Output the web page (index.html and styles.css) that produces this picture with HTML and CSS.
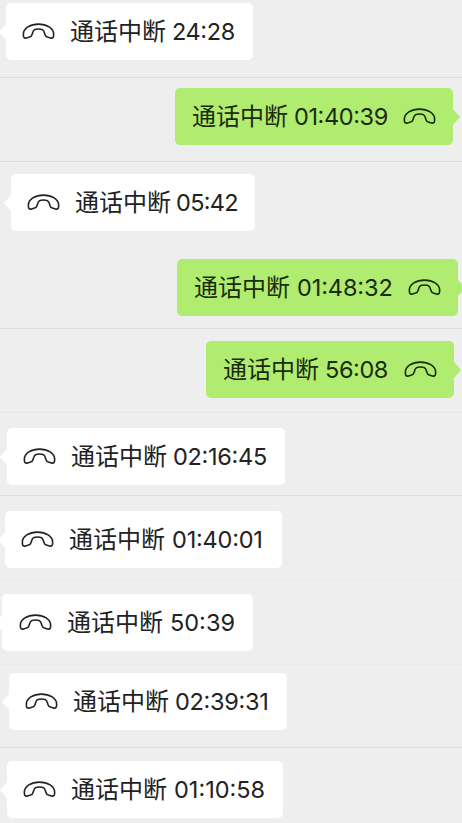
FILE: index.html
```html
<!DOCTYPE html>
<html lang="zh-CN">
<head>
    <meta charset="UTF-8">
    <meta name="viewport" content="width=device-width, initial-scale=1.0">
    <title>通话记录</title>
    <link rel="stylesheet" href="styles.css">
</head>
<body>
    <svg class="defs" width="0" height="0">
        <symbol id="phone" viewBox="0 0 34 18">
            <path d="M1 11.7C1 5.6 8.2 1.2 17 1.2S33 5.6 33 11.7V13.2C33 15.8 31.6 16.3 29.6 15.8L26.4 14.9C24.9 14.5 24.3 13.6 23.8 12.1L22.9 9.3C22.2 6.9 20.5 6.3 17 6.3S11.8 6.9 11.1 9.3L10.2 12.1C9.7 13.6 9.1 14.5 7.6 14.9L4.4 15.8C2.4 16.3 1 15.8 1 13.2Z"/>
        </symbol>
    </svg>
    <div class="chat">
        <div class="row row1">
            <div class="bubble left">
                <svg class="icon"><use href="#phone"/></svg>
                <p><span class="label">通话中断</span> <span class="time">24:28</span></p>
            </div>
        </div>
        <div class="row row2 me">
            <div class="bubble right">
                <p><span class="label">通话中断</span> <span class="time">01:40:39</span></p>
                <svg class="icon"><use href="#phone"/></svg>
            </div>
        </div>
        <div class="row row3">
            <div class="bubble left">
                <svg class="icon"><use href="#phone"/></svg>
                <p><span class="label">通话中断</span> <span class="time">05:42</span></p>
            </div>
        </div>
        <div class="row row4 me">
            <div class="bubble right">
                <p><span class="label">通话中断</span> <span class="time">01:48:32</span></p>
                <svg class="icon"><use href="#phone"/></svg>
            </div>
        </div>
        <div class="row row5 me">
            <div class="bubble right">
                <p><span class="label">通话中断</span> <span class="time">56:08</span></p>
                <svg class="icon"><use href="#phone"/></svg>
            </div>
        </div>
        <div class="row row6">
            <div class="bubble left">
                <svg class="icon"><use href="#phone"/></svg>
                <p><span class="label">通话中断</span> <span class="time">02:16:45</span></p>
            </div>
        </div>
        <div class="row row7">
            <div class="bubble left">
                <svg class="icon"><use href="#phone"/></svg>
                <p><span class="label">通话中断</span> <span class="time">01:40:01</span></p>
            </div>
        </div>
        <div class="row row8">
            <div class="bubble left">
                <svg class="icon"><use href="#phone"/></svg>
                <p><span class="label">通话中断</span> <span class="time">50:39</span></p>
            </div>
        </div>
        <div class="row row9">
            <div class="bubble left">
                <svg class="icon"><use href="#phone"/></svg>
                <p><span class="label">通话中断</span> <span class="time">02:39:31</span></p>
            </div>
        </div>
        <div class="row row10">
            <div class="bubble left">
                <svg class="icon"><use href="#phone"/></svg>
                <p><span class="label">通话中断</span> <span class="time">01:10:58</span></p>
            </div>
        </div>
    </div>
</body>
</html>
```
FILE: styles.css
```css
* {
    box-sizing: border-box;
}

body {
    margin: 0;
    background-color: #eeeeee;
    font-family: "Noto Sans CJK SC", sans-serif;
    overflow: hidden;
}

.defs {
    display: block;
}

.chat {
    width: 462px;
    height: 823px;
    overflow: hidden;
}

.row {
    display: flex;
    align-items: flex-start;
    height: 84px;
    border-bottom: 1px solid #dcdcdc;
}

.me {
    justify-content: flex-end;
}

.bubble {
    position: relative;
    display: flex;
    align-items: center;
    height: 57px;
    padding: 0 17px;
    border-radius: 5px;
    color: #222;
}

.left {
    background-color: #fff;
    padding-left: 16px;
}

.right {
    background-color: #afec6f;
    color: #1b2b0e;
}

/* little arrow on the side of the bubble */
.bubble::after {
    content: "";
    position: absolute;
    top: 21px;
    border-top: 8px solid transparent;
    border-bottom: 8px solid transparent;
}

.left::after {
    left: -7px;
    border-right: 7px solid #fff;
}

.right::after {
    right: -7px;
    border-left: 7px solid #afec6f;
}

.icon {
    flex: none;
    width: 33px;
    height: 17px;
    fill: none;
    stroke: currentColor;
    stroke-width: 1.7;
}

.left .icon {
    margin-right: 15px;
}

.right .icon {
    margin-left: auto;
}

p {
    display: flex;
    align-items: center;
    margin: 0;
    font-size: 24px;
    line-height: 57px;
    white-space: nowrap;
}

.label {
    padding-bottom: 3px;
    line-height: 54px;
}

.time {
    margin-left: 6px;
    font-family: Inter, sans-serif;
    font-size: 23.5px;
    letter-spacing: -0.4px;
    font-feature-settings: "calt" 1;
}

.row1 { height: 78px; padding: 3px 0 0 6px; }
.row1 .bubble { width: 247px; }

.row2 { padding: 10px 9px 0 0; }
.row2 .bubble { width: 278px; }

.row3 { height: 83px; padding: 12px 0 0 11px; border-bottom: none; }
.row3 .bubble { width: 244px; }
.row3 .time { letter-spacing: -0.7px; margin-left: 5px; }

.row4 { padding: 14px 4px 0 0; }
.row4 .bubble { width: 281px; }
.row4 .time { letter-spacing: -0.1px; margin-left: 7px; }

.row5 { padding: 12px 8px 0 0; border-color: #e6e6e6; }
.row5 .bubble { width: 248px; }

.row6 { height: 83px; padding: 15px 0 0 7px; }
.row6 .bubble { width: 278px; }
.row6 .time { letter-spacing: -0.3px; }

.row7 { padding: 15px 0 0 5px; border-color: #e8e8e8; }
.row7 .bubble { width: 277px; }
.row7 .time { letter-spacing: -0.2px; margin-left: 7px; }

.row8 { height: 85px; padding: 14px 0 0 2px; border-color: #e8e8e8; }
.row8 .bubble { width: 251px; padding-left: 17px; }
.row8 .time { letter-spacing: 0; margin-left: 7px; }

.row9 { height: 83px; padding: 8px 0 0 9px; }
.row9 .bubble { width: 278px; }
.row9 .time { letter-spacing: -0.3px; }

.row10 { height: 75px; padding: 13px 0 0 7px; border-bottom: none; }
.row10 .bubble { width: 276px; }
.row10 .time { letter-spacing: 0; margin-left: 7px; }
```
